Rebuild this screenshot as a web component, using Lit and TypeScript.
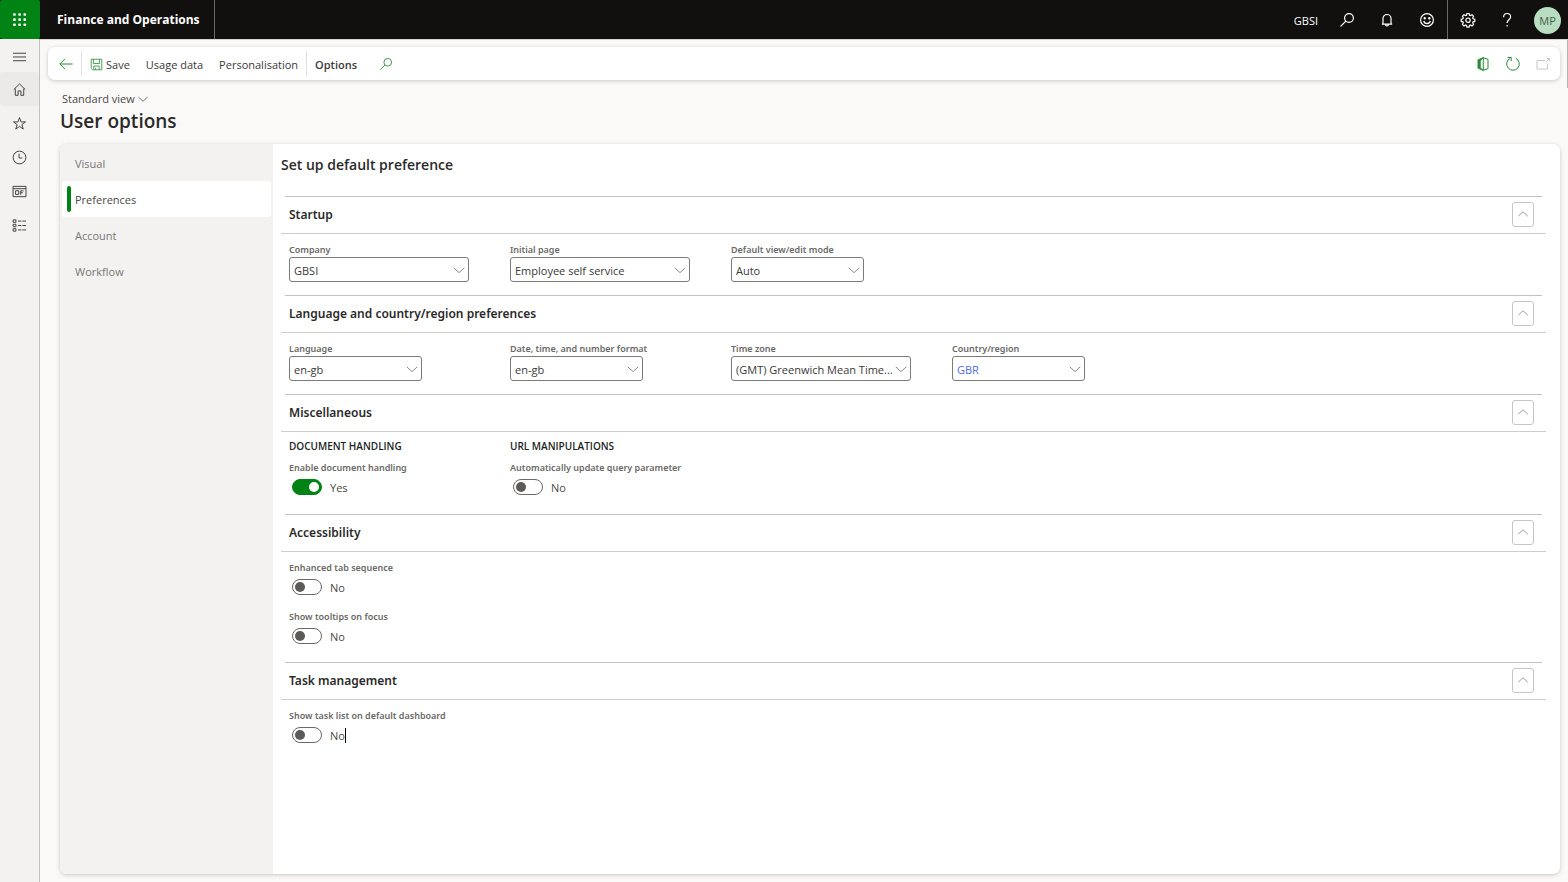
import { LitElement, html, css, svg, nothing } from "lit";
import { customElement, property, state } from "lit/decorators.js";
import { classMap } from "lit/directives/class-map.js";

const icons = {
  waffle: svg`<g fill="currentColor" stroke="none">${[1.2, 6.7, 12.2].map((y) =>
    [1.2, 6.7, 12.2].map((x) => svg`<rect x=${x} y=${y} width="2.800" height="2.800" rx=".8"/>`),
  )}</g>`,
  search: svg`<circle cx="10" cy="6" r="4.400"/><path d="M6.800 9.200 1.500 14.500"/>`,
  bell: svg`<path d="M4 12V6.500a4 4 0 0 1 8 0V12M2.800 12.200h10.400M6.600 12.600a1.400 1.400 0 0 0 2.800 0"/>`,
  smile: svg`<circle cx="8" cy="8" r="6.400"/><path d="M4.700 9a3.400 3.400 0 0 0 6.600 0"/><circle cx="5.700" cy="6.200" r=".6" fill="currentColor"/><circle cx="10.300" cy="6.200" r=".6" fill="currentColor"/>`,
  gear: svg`<path d="M6.900 1.500h2.200l.4 1.700 1 .4 1.500-.9 1.600 1.600-.9 1.500.4 1 1.700.4v2.200l-1.700.4-.4 1 .9 1.500-1.600 1.600-1.500-.9-1 .4-.4 1.700H6.900l-.4-1.700-1-.4-1.500.9-1.600-1.600.9-1.500-.4-1-1.700-.4V7.200l1.700-.4.4-1-.9-1.500L4 2.700l1.500.9 1-.4z"/><circle cx="8" cy="8.200" r="2.200"/>`,
  help: svg`<path d="M4.600 5.200c0-2.200 1.400-3.700 3.500-3.700s3.500 1.300 3.500 3.200c0 2.900-3.500 3.100-3.500 6.200"/><path d="M8.100 13v1.500"/>`,
  menu: svg`<path d="M1 4.500h14M1 8.500h14M1 12.500h14"/>`,
  home: svg`<path d="m1.900 8 6.100-6 6.100 6M3.500 7v7.200h3V9.500h3v4.700h3V7"/>`,
  star: svg`<path d="m8 1.700 1.600 4.600h4.800l-3.900 2.900 1.500 4.700L8 11.100l-4 2.800 1.500-4.700L1.600 6.300h4.800z"/>`,
  clock: svg`<circle cx="8" cy="8" r="6.800"/><path d="M7.500 4v4.500H11"/>`,
  workspace: svg`<path d="M1.100 2.500h13.800v11H1.100zM1.100 5h13.800M3.800 7.200h3.400v3.900H3.800zM9.300 11.500V7.300h3M9.300 9.300h2.200"/>`,
  modules: svg`<path d="M1.200 2h3v2.600h-3zM1.200 6.700h3v2.600h-3zM1.200 11.400h3V14h-3zM6.500 3.300h3.500M11 3.300h4M6.500 8h3.500M11 8h4M6.500 12.700h3.500M11 12.700h4"/>`,
  back: svg`<path d="M14.600 8H1.800M7 2.800 1.800 8 7 13.200"/>`,
  save: svg`<path d="M1.500 1.500h13v13H3.200l-1.700-1.700zM4.200 1.500v5.300h7.600V1.500M4.700 14.500v-4.600h6.600v4.600M7 12v2.500"/>`,
  office: svg`<path d="M8.300 1.500 3 3.900v8.200l5.300 2.400-3.100-2.800V4.800z" fill="currentColor"/><path d="M8.300 1.800 13 3.300v9.400l-4.700 1.500z"/>`,
  refresh: svg`<path d="M10.800 2.300a6.300 6.300 0 1 1-5.600 0M2.600 1.500h3.600v3.600"/>`,
  popout: svg`<path d="M10 4.500H2v8.500h10.500V8M10.800 6.200l3.700-3.700M11.800 2.500h2.700v2.700"/>`,
  down: svg`<path d="m2 5.500 6 5.500 6-5.500"/>`,
  up: svg`<path d="M2.500 10.500 8 5.500l5.500 5"/>`,
};

type IconName = keyof typeof icons;

const icon = (name: IconName, size = 16) => html`<svg
  class="icon"
  width=${size}
  height=${size}
  viewBox="0 0 16 16"
  fill="none"
  stroke="currentColor"
  aria-hidden="true"
>${icons[name]}</svg>`;

const base = css`
  * {
    box-sizing: border-box;
  }
  button,
  select,
  input {
    font: inherit;
    color: inherit;
    margin: 0;
  }
  button {
    background: none;
    border: 0;
    padding: 0;
    cursor: pointer;
  }
  .icon {
    display: block;
    flex: none;
  }
  .label {
    display: block;
    font-family: "Noto Sans", "Open Sans", sans-serif;
    font-size: 9px;
    font-weight: 600;
    line-height: 14px;
    color: #6b6967;
    white-space: nowrap;
  }
`;

@customElement("choice-field")
class ChoiceField extends LitElement {
  @property() label = "";
  @property() value = "";
  @property({ type: Boolean }) narrow = false;
  @property({ type: Boolean }) linked = false;

  static styles = [
    base,
    css`
      :host {
        display: block;
      }
      .box {
        display: grid;
        align-items: center;
        width: 180px;
      }
      .box.narrow {
        width: 133px;
      }
      .select,
      .arrow {
        grid-area: 1 / 1;
      }
      .select {
        appearance: none;
        width: 100%;
        height: 25px;
        padding: 1px 18px 0 4px;
        border: 1px solid #7d7b79;
        border-radius: 3px;
        background: #fff;
        color: #3b3a39;
      }
      .linked .select {
        color: #4f6bed;
      }
      .arrow {
        justify-self: end;
        padding-right: 3px;
        color: #7a7876;
        pointer-events: none;
      }
    `,
  ];

  render() {
    return html`
      <label class="label" for="choice">${this.label}</label>
      <div class=${classMap({ box: true, narrow: this.narrow, linked: this.linked })}>
        <select class="select" id="choice">
          <option>${this.value}</option>
        </select>
        <span class="arrow">${icon("down", 14)}</span>
      </div>
    `;
  }
}

@customElement("toggle-field")
class ToggleField extends LitElement {
  @property() label = "";
  @property({ type: Boolean }) on = false;
  @property({ type: Boolean }) caret = false;

  static styles = [
    base,
    css`
      :host {
        display: block;
        padding-bottom: 1px;
      }
      .row {
        display: flex;
        align-items: center;
        height: 24px;
        padding-left: 3px;
        gap: 8px;
      }
      .switch {
        appearance: none;
        display: flex;
        align-items: center;
        width: 30px;
        height: 16px;
        padding: 0 2px;
        border: 1px solid #6b6967;
        border-radius: 8px;
        background: #fff;
        cursor: pointer;
      }
      .switch::before {
        content: "";
        width: 10px;
        height: 10px;
        border-radius: 50%;
        background: #5d5b59;
      }
      .switch:checked {
        justify-content: flex-end;
        border-color: #008314;
        background: #008314;
      }
      .switch:checked::before {
        background: #fff;
      }
      .state {
        line-height: 15px;
        color: #4a4846;
      }
      .caret {
        border-right: 1px solid #000;
      }
    `,
  ];

  render() {
    return html`
      <label class="label" for="switch">${this.label}</label>
      <div class="row">
        <input
          class="switch"
          id="switch"
          type="checkbox"
          role="switch"
          .checked=${this.on}
          @change=${(e: Event) => (this.on = (e.target as HTMLInputElement).checked)}
        />
        <span class=${classMap({ state: true, caret: this.caret })}>${this.on ? "Yes" : "No"}</span>
      </div>
    `;
  }
}

@customElement("form-section")
class FormSection extends LitElement {
  @property() heading = "";
  @state() open = true;

  static styles = [
    base,
    css`
      :host {
        display: block;
      }
      .rule {
        height: 1px;
        margin: 0 4px;
        background: #c4c2c0;
      }
      .head {
        display: flex;
        align-items: center;
        justify-content: space-between;
        height: 37px;
        padding: 0 12px 2px 8px;
        border-bottom: 1px solid #cfcdcb;
      }
      .title {
        margin: 0;
        padding-top: 2px;
        font-family: "Noto Sans", "Open Sans", sans-serif;
        font-size: 12px;
        font-weight: 600;
        line-height: 18px;
        color: #2b2a29;
      }
      .fold {
        display: grid;
        place-items: center;
        width: 22px;
        height: 25px;
        border: 1px solid #c8c6c4;
        border-radius: 3px;
        color: #908e8c;
      }
      .body {
        display: grid;
        grid-template-columns: repeat(auto-fill, 180px);
        gap: 10px 41px;
        padding: 9px 8px 13px;
      }
    `,
  ];

  render() {
    return html`
      <div class="rule"></div>
      <div class="head">
        <h3 class="title">${this.heading}</h3>
        <button
          class="fold"
          aria-label="Toggle ${this.heading}"
          aria-expanded=${this.open}
          @click=${() => (this.open = !this.open)}
        >
          ${icon(this.open ? "up" : "down", 14)}
        </button>
      </div>
      ${this.open ? html`<div class="body"><slot></slot></div>` : nothing}
    `;
  }
}

@customElement("app-root")
class AppRoot extends LitElement {
  @state() tab = "Preferences";

  static styles = [
    base,
    css`
      :host {
        display: flex;
        flex-direction: column;
        min-height: 100vh;
        font-family: "Open Sans", "Noto Sans", sans-serif;
        font-size: 11px;
        color: #3b3a39;
        background: #faf9f8;
      }
      .top {
        display: flex;
        align-items: stretch;
        height: 39px;
        background: #11100f;
        color: #fff;
      }
      .waffle {
        display: grid;
        place-items: center;
        width: 40px;
        padding-right: 1px;
        background: #008314;
        border-radius: 2px;
      }
      .brand {
        display: flex;
        align-items: center;
        padding: 0 14px 0 17px;
        border-right: 1px solid #6b6967;
        font-size: 12px;
        font-weight: 700;
      }
      .company {
        display: flex;
        align-items: center;
        margin-left: auto;
        padding: 2px 9px 0;
      }
      .tool {
        display: grid;
        place-items: center;
        width: 40px;
        padding-top: 1px;
      }
      .tool .icon {
        stroke-width: 1.2;
      }
      .tool.split {
        border-left: 1px solid #6b6967;
      }
      .tool:last-child {
        width: 41px;
      }
      .avatar {
        display: grid;
        place-items: center;
        width: 27px;
        height: 27px;
        border-radius: 50%;
        background: #b9ddc0;
        color: #42604a;
      }
      .frame {
        display: flex;
        flex: 1;
      }
      .rail {
        display: flex;
        flex-direction: column;
        flex: none;
        width: 40px;
        background: #f3f2f1;
        border-right: 1px solid #c4c2c0;
        color: #3b3a39;
      }
      .rail-item {
        display: grid;
        place-items: center;
        height: 34px;
      }
      .rail-item:first-child {
        height: 33px;
        padding-top: 2px;
      }
      .rail-item.current {
        background: #ebeae9;
        border-radius: 3px;
      }
      .page {
        position: relative;
        display: flex;
        flex-direction: column;
        flex: 1;
        min-width: 0;
        padding: 7px 8px 8px;
        border-top: 1px solid #d6d4d2;
      }
      .scroll {
        position: absolute;
        top: 0;
        right: 0;
        width: 1px;
        height: 48px;
        background: #b5b3b1;
      }
      .actions {
        display: flex;
        align-items: center;
        height: 33px;
        padding: 0 2px 0 8px;
        border-radius: 7px;
        background: #fff;
        box-shadow: 0 1px 4px rgba(0, 0, 0, 0.2);
      }
      .action {
        display: flex;
        align-items: center;
        gap: 3px;
        height: 33px;
        padding: 1px 8px 0;
        white-space: nowrap;
      }
      .action.back {
        padding: 0 7px 0 2px;
      }
      .action.strong {
        font-weight: 600;
      }
      .action.find {
        padding: 0 14px;
      }
      .action.end {
        padding: 0 7px;
      }
      .green {
        color: #2c8a3a;
      }
      .dim {
        color: #c8c6c4;
      }
      .bar {
        width: 1px;
        height: 25px;
        background: #e1dfdd;
      }
      .spacer {
        flex: 1;
      }
      .view {
        display: flex;
        align-items: center;
        align-self: flex-start;
        gap: 2px;
        margin: 11px 0 0 14px;
        line-height: 15px;
        color: #4a4846;
      }
      .heading {
        margin: 3px 0 11px 12px;
        font-size: 19px;
        font-weight: 600;
        line-height: 24px;
        color: #2b2a29;
      }
      .card {
        display: flex;
        flex: 1;
        margin-left: 12px;
        border-radius: 7px;
        background: #fff;
        box-shadow: 0 1px 4px rgba(0, 0, 0, 0.2);
        overflow: hidden;
      }
      .tabs {
        flex: none;
        width: 213px;
        padding: 1px 2px;
        background: #f3f2f1;
      }
      .tab {
        display: flex;
        align-items: center;
        gap: 4px;
        width: 100%;
        height: 36px;
        padding-left: 5px;
        border-radius: 3px;
        color: #797775;
      }
      .tab::before {
        content: "";
        width: 4px;
        height: 26px;
        border-radius: 2px;
      }
      .tab.current {
        background: #fff;
        color: #4a4846;
      }
      .tab.current::before {
        background: #008314;
      }
      .content {
        flex: 1;
        min-width: 0;
        padding: 11px 14px 0 8px;
      }
      .subtitle {
        margin: 0 0 21px;
        font-size: 14px;
        font-weight: 600;
        line-height: 20px;
        color: #2b2a29;
      }
      .column {
        padding-bottom: 1px;
      }
      .group {
        margin: 0 0 10px;
        font-size: 10px;
        font-weight: 600;
        line-height: 10px;
        color: #201f1e;
        white-space: nowrap;
      }
      .wide {
        grid-column: 1 / -1;
      }
    `,
  ];

  render() {
    const rail: [IconName, string][] = [
      ["menu", "Expand the navigation pane"],
      ["home", "Home"],
      ["star", "Favourites"],
      ["clock", "Recent"],
      ["workspace", "Workspaces"],
      ["modules", "Modules"],
    ];
    return html`
      <header class="top">
        <button class="waffle" aria-label="App launcher">${icon("waffle", 15)}</button>
        <div class="brand">Finance and Operations</div>
        <button class="company">GBSI</button>
        <button class="tool" aria-label="Search">${icon("search")}</button>
        <button class="tool" aria-label="Notifications">${icon("bell")}</button>
        <button class="tool" aria-label="Feedback">${icon("smile")}</button>
        <button class="tool split" aria-label="Settings">${icon("gear")}</button>
        <button class="tool" aria-label="Help">${icon("help")}</button>
        <button class="tool" aria-label="Account"><span class="avatar">MP</span></button>
      </header>
      <div class="frame">
        <nav class="rail">
          ${rail.map(
            ([name, label]) => html`<button
              class=${classMap({ "rail-item": true, current: name === "home" })}
              aria-label=${label}
            >
              ${icon(name, 15)}
            </button>`,
          )}
        </nav>
        <main class="page">
          <div class="scroll"></div>
          <div class="actions">
            <button class="action back green" aria-label="Back">${icon("back")}</button>
            <span class="bar"></span>
            <button class="action"><span class="green">${icon("save", 13)}</span>Save</button>
            <button class="action">Usage data</button>
            <button class="action">Personalisation</button>
            <span class="bar"></span>
            <button class="action strong">Options</button>
            <button class="action find green" aria-label="Search actions">${icon("search", 14)}</button>
            <span class="spacer"></span>
            <button class="action end green" aria-label="Open in Microsoft Office">${icon("office")}</button>
            <button class="action end green" aria-label="Refresh">${icon("refresh")}</button>
            <button class="action end dim" aria-label="Open in new window">${icon("popout")}</button>
          </div>
          <button class="view">Standard view ${icon("down", 12)}</button>
          <h1 class="heading">User options</h1>
          <div class="card">
            <nav class="tabs">
              ${["Visual", "Preferences", "Account", "Workflow"].map(
                (t) => html`<button
                  class=${classMap({ tab: true, current: t === this.tab })}
                  @click=${() => (this.tab = t)}
                >
                  ${t}
                </button>`,
              )}
            </nav>
            <section class="content">
              <h2 class="subtitle">Set up default preference</h2>
              <form-section heading="Startup">
                <choice-field label="Company" value="GBSI"></choice-field>
                <choice-field label="Initial page" value="Employee self service"></choice-field>
                <choice-field label="Default view/edit mode" value="Auto" narrow></choice-field>
              </form-section>
              <form-section heading="Language and country/region preferences">
                <choice-field label="Language" value="en-gb" narrow></choice-field>
                <choice-field label="Date, time, and number format" value="en-gb" narrow></choice-field>
                <choice-field label="Time zone" value="(GMT) Greenwich Mean Time..."></choice-field>
                <choice-field label="Country/region" value="GBR" narrow linked></choice-field>
              </form-section>
              <form-section heading="Miscellaneous">
                <div class="column">
                  <h4 class="group">DOCUMENT HANDLING</h4>
                  <toggle-field label="Enable document handling" on></toggle-field>
                </div>
                <div class="column">
                  <h4 class="group">URL MANIPULATIONS</h4>
                  <toggle-field label="Automatically update query parameter"></toggle-field>
                </div>
              </form-section>
              <form-section heading="Accessibility">
                <toggle-field class="wide" label="Enhanced tab sequence"></toggle-field>
                <toggle-field class="wide" label="Show tooltips on focus"></toggle-field>
              </form-section>
              <form-section heading="Task management">
                <toggle-field label="Show task list on default dashboard" caret></toggle-field>
              </form-section>
            </section>
          </div>
        </main>
      </div>
    `;
  }
}
